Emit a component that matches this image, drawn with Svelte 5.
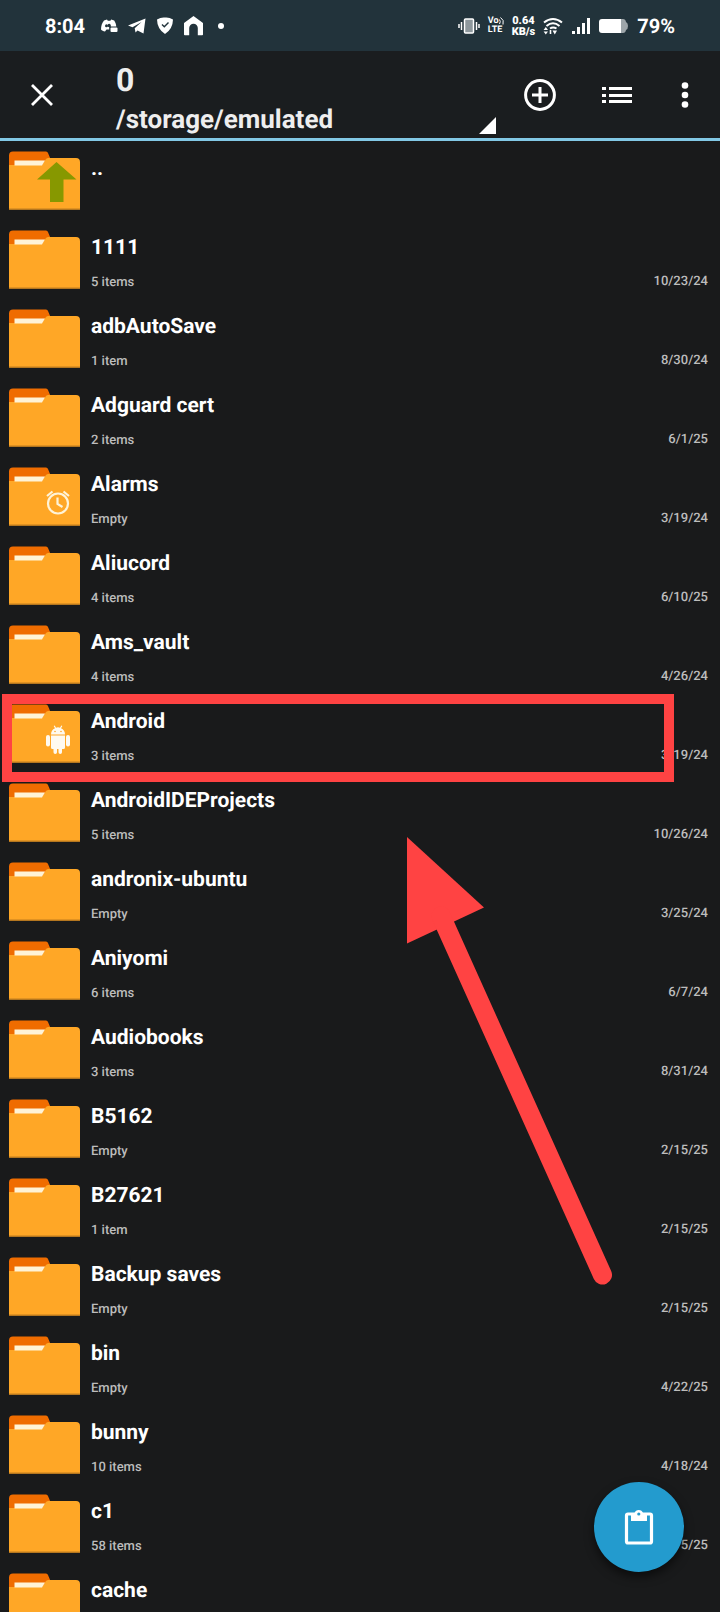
<script>
  const entries = [
    { name: '..', parent: true },
    { name: '1111', info: '5 items', date: '10/23/24' },
    { name: 'adbAutoSave', info: '1 item', date: '8/30/24' },
    { name: 'Adguard cert', info: '2 items', date: '6/1/25' },
    { name: 'Alarms', info: 'Empty', date: '3/19/24', badge: 'alarm' },
    { name: 'Aliucord', info: '4 items', date: '6/10/25' },
    { name: 'Ams_vault', info: '4 items', date: '4/26/24' },
    { name: 'Android', info: '3 items', date: '3/19/24', badge: 'android', marked: true },
    { name: 'AndroidIDEProjects', info: '5 items', date: '10/26/24' },
    { name: 'andronix-ubuntu', info: 'Empty', date: '3/25/24' },
    { name: 'Aniyomi', info: '6 items', date: '6/7/24' },
    { name: 'Audiobooks', info: '3 items', date: '8/31/24' },
    { name: 'B5162', info: 'Empty', date: '2/15/25' },
    { name: 'B27621', info: '1 item', date: '2/15/25' },
    { name: 'Backup saves', info: 'Empty', date: '2/15/25' },
    { name: 'bin', info: 'Empty', date: '4/22/25' },
    { name: 'bunny', info: '10 items', date: '4/18/24' },
    { name: 'c1', info: '58 items', date: '6/5/25' },
    { name: 'cache' },
  ];
</script>

<div class="screen">
  <div class="status">
    <div class="status-left">
      <span class="clock">8:04</span>
      <div class="notices">
        <svg width="18" height="18" viewBox="0 0 18 18" fill="#fff" aria-hidden="true">
          <path d="M4 3.500 7 2.500l.8 1.200h2.600l.8-1.200 3 1c1.200 1.800 1.900 3.800 2.100 6h-5.500V8.300a1.600 1.700 0 1 0-1.600 1.900v2.300H6.500L5 14.500C3.200 14.200 2 13.400 1 12.500 1 9 2 5.800 4 3.500z" />
          <circle cx="6.500" cy="8.700" r="1.500" fill="#22333b" />
          <rect x="10.500" y="10.500" width="7" height="4.500" rx="1" />
        </svg>
        <svg width="18" height="18" viewBox="0 0 18 18" fill="#fff" aria-hidden="true">
          <path d="M17.500 1.500 15.500 16.500 9.500 13.500l-2 2-.8-4.200L13.500 5 4.500 10.300 0 8.500z" />
        </svg>
        <svg width="18" height="18" viewBox="0 0 18 18" aria-hidden="true">
          <path d="M1 2.500Q5 0 9 .5q4-.5 8 2-.2 9.500-8 14.500Q1.200 12 1 2.500z" fill="#fff" />
          <path d="m6 7.500 2.300 2.300L12.500 5.500" fill="none" stroke="#22333b" stroke-width="1.400" />
        </svg>
        <svg width="19" height="20" viewBox="0 0 19 20" fill="#fff" aria-hidden="true">
          <path d="M9.500 0 19 7v11.500q0 .8-.8.8h-4.400V12a4.300 4.300 0 0 0-8.600 0v7.300H.8q-.8 0-.8-.8V7z" />
        </svg>
      </div>
      <span class="dot"></span>
    </div>
    <div class="status-right">
      <svg width="22" height="18" viewBox="0 0 22 18" aria-hidden="true">
        <rect x="6.500" y="2" width="9" height="14" rx="1" fill="#8e989d" stroke="#fff" stroke-width="1.500" />
        <path d="M3.500 5v8M18.500 5v8M1 7v4M21 7v4" stroke="#fff" stroke-width="1.500" />
      </svg>
      <span class="volte"><span>Vo<svg width="5" height="8" viewBox="0 0 5 8" fill="none" stroke="#fff" aria-hidden="true"><path d="M.5 2.500Q2 4.500.5 7M1.500.5Q5.500 3 4 7.500" /></svg></span><span>LTE</span></span>
      <span class="speed"><span>0.64</span><span>KB/s</span></span>
      <svg width="20" height="18" viewBox="0 0 20 18" fill="none" stroke="#fff" stroke-width="2" aria-hidden="true">
        <path d="M1 5.500Q10-1.500 19 5.500M3.500 9Q10 3.500 16.500 9M7 11.500q3-2.200 6.500 0" />
        <path d="M9.500 13.500H14L11.800 17.500z" fill="#fff" stroke="none" />
        <path d="M2.800 10 5 13H.6zM2.800 17.500.6 14.500H5z" fill="#fff" stroke="none" />
        <path d="M7.500 17v-4" stroke-width="1.600" />
      </svg>
      <svg width="20" height="18" viewBox="0 0 20 18" fill="#fff" aria-hidden="true">
        <path d="M1 14h3v3H1zM6 10h3v7H6zM11 6h3v11h-3zM16 1h3v16h-3z" />
      </svg>
      <svg width="30" height="16" viewBox="0 0 30 16" aria-hidden="true">
        <path d="M22 1h2q2.500 0 3 3 2 1 2 4t-2 4q-.5 3-3 3h-2z" fill="#9da5a9" />
        <path d="M3 1h19v14H3q-3 0-3-3V4q0-3 3-3z" fill="#fff" />
      </svg>
      <span class="percent">79%</span>
    </div>
  </div>

  <header>
    <button class="close" aria-label="Close">
      <svg width="24" height="24" viewBox="0 0 24 24" stroke="#fff" stroke-width="2.800" aria-hidden="true">
        <path d="m2 2 20 20M22 2 2 22" />
      </svg>
    </button>
    <button class="path">
      <span class="current">0</span>
      <span class="parent">/storage/emulated</span>
      <svg class="corner" width="17" height="17" viewBox="0 0 17 17" aria-hidden="true"><path d="M17 0v17H0z" fill="#fff" /></svg>
    </button>
    <nav>
      <button aria-label="Add">
        <svg width="32" height="32" viewBox="0 0 32 32" fill="none" stroke="#fff" stroke-width="3" aria-hidden="true">
          <circle cx="16" cy="16" r="14.400" /><path d="M16 8v16M8 16h16" />
        </svg>
      </button>
      <button aria-label="View mode">
        <svg width="30" height="18" viewBox="0 0 30 18" fill="#fff" aria-hidden="true">
          <path d="M0 1h4v3H0zM7 1h23v3H7zM0 8h4v3H0zM7 8h23v3H7zM0 14h4v3H0zM7 14h23v3H7z" />
        </svg>
      </button>
      <button aria-label="More options">
        <svg width="14" height="28" viewBox="0 0 14 28" fill="#fff" aria-hidden="true">
          <circle cx="7" cy="4.500" r="3.300" /><circle cx="7" cy="14" r="3.300" /><circle cx="7" cy="23.500" r="3.300" />
        </svg>
      </button>
    </nav>
  </header>

  <ul>
    {#each entries as entry}
      <li>
        <svg class="folder" width="71" height="59" viewBox="0 0 71 59" aria-hidden="true">
          <path d="M0 20V4.500q0-4 4-4h33q1.500 0 2 1.500L44 14v6z" fill="#ef6c00" />
          <path d="M0 14h33l4-6q1-1 2.500-1H67q4 0 4 4v47.500H0z" fill="#ffa726" />
          <path d="M5.500 9.500H36l-3 5H5.500z" fill="#fff3d6" />
          <path d="M0 57.500h71v1.300H0z" fill="#c27e1f" />
          {#if entry.parent}
            <path d="M47.500 11 67.500 28.500H54.500v22.500H41V28.500H28z" fill="#879800" />
          {:else if entry.badge === 'alarm'}
            <g fill="none" stroke="#fff3d6" stroke-width="2.200">
              <circle cx="49" cy="36.500" r="10" />
              <path d="M48.500 30.500v6.500l5 3M38 29l5.500-4.500M60 29l-5.500-4.500" />
            </g>
          {:else if entry.badge === 'android'}
            <g fill="#fffaf0">
              <path d="M42 30.500q0-4.500 4-6.300L44.700 22l1-.6 1.300 2.300q2-.7 4 0l1.300-2.300 1 .6L52 24.200q4 1.800 4 6.300z" />
              <path d="M42 31.500h14v12q0 1.500-1.500 1.500H53v3.200a1.700 1.700 0 0 1-3.500 0V45h-1.500v3.200a1.700 1.700 0 0 1-3.500 0V45h-1q-1.500 0-1.500-1.500z" />
              <rect x="37" y="31" width="4" height="11.500" rx="2" /><rect x="57" y="31" width="4" height="11.500" rx="2" />
            </g>
            <circle cx="46" cy="27.500" r=".8" fill="#ffa726" /><circle cx="52" cy="27.500" r=".8" fill="#ffa726" />
          {/if}
        </svg>
        <div class="text">
          <span class="name">{entry.name}</span>
          {#if entry.info}
            <div class="meta"><span class="info">{entry.info}</span><span>{entry.date}</span></div>
          {/if}
        </div>
        {#if entry.marked}
          <div class="mark"></div>
          <svg class="arrow" width="78" height="450" viewBox="0 0 78 450" aria-hidden="true">
            <path d="M0 0 77 70.500 0 106.500z" fill="#ff4343" />
            <path d="M34 79 195.500 438" stroke="#ff4343" stroke-width="19" stroke-linecap="round" />
          </svg>
        {/if}
      </li>
    {/each}
  </ul>

  <button class="fab" aria-label="Paste">
    <svg width="30" height="36" viewBox="0 0 30 36" aria-hidden="true">
      <rect x="2.500" y="5" width="25" height="29" rx="1.500" fill="none" stroke="#fff" stroke-width="3.200" />
      <path d="M7 4h3.500a4.500 4.500 0 0 1 8.500 0H23v8H7z" fill="#fff" />
      <circle cx="14.800" cy="5" r="1.600" fill="#239bce" />
    </svg>
  </button>
</div>

<style>
  :global(body) { margin: 0; background: #191a1b; }
  .screen { position: relative; height: 100vh; overflow: hidden; display: flex; flex-direction: column; background: #191a1b; color: #fff; font-family: Roboto, sans-serif; text-rendering: geometricPrecision; }
  svg { display: block; flex: none; }
  button { border: 0; padding: 0; background: none; color: inherit; font: inherit; text-rendering: inherit; cursor: pointer; }
  .status { display: flex; flex: none; justify-content: space-between; height: 51px; padding: 0 45px; background: #22333b; }
  .status-left, .status-right, .notices { display: flex; align-items: center; }
  .status-left { gap: 15px; }
  .notices { gap: 10px; }
  .clock, .percent { font-size: 20px; line-height: 24px; font-weight: 700; }
  .dot { width: 6px; height: 6px; border-radius: 50%; background: #fff; }
  .status-right { gap: 8px; }
  .volte, .speed { display: flex; flex-direction: column; font-size: 9px; line-height: 9px; font-weight: 700; }
  .volte span { display: flex; }
  .speed { align-items: center; font-size: 11px; line-height: 11px; font-weight: 900; }
  header { display: flex; flex: none; height: 87px; background: #1a1d1f; border-bottom: 3px solid #82c8e5; }
  .close { display: grid; place-items: center; width: 84px; }
  .path { position: relative; display: flex; flex: 1; flex-direction: column; align-items: flex-start; margin: 0 28px 0 32px; padding-top: 9px; color: #eee; font-weight: 700; }
  .current { font-size: 32px; line-height: 40px; }
  .parent { font-size: 26px; line-height: 40px; }
  .corner { position: absolute; right: 0; bottom: 4px; }
  nav { display: flex; align-items: center; gap: 46px; padding-right: 28px; }
  ul { flex: none; margin: 0; padding: 0; list-style: none; }
  li { position: relative; display: flex; gap: 11px; height: 79px; padding: 10px 12px 0 9px; box-sizing: border-box; }
  .text { flex: 1; min-width: 0; }
  .name { display: block; font-size: 21px; line-height: 36px; font-weight: 700; }
  .meta { display: flex; justify-content: space-between; align-items: flex-start; padding-top: 7px; font-size: 13px; line-height: 18px; font-weight: 500; color: #bdbdbd; }
  .info { line-height: 20px; }
  .mark { position: absolute; left: 2px; right: 46px; top: 0; height: 88px; box-sizing: border-box; border: 10px solid #ff4343; z-index: 1; }
  .arrow { position: absolute; left: 407px; top: 143px; overflow: visible; z-index: 1; }
  .fab { position: absolute; right: 36px; bottom: 40px; display: grid; place-items: center; width: 90px; height: 90px; border-radius: 50%; background: #239bce; box-shadow: 0 5px 10px #0008; z-index: 2; }
</style>
